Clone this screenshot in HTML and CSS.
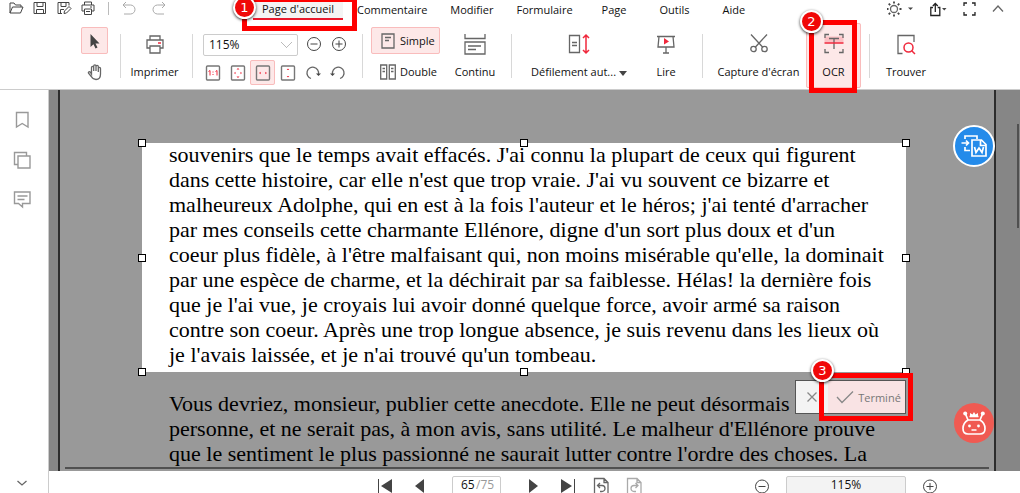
FILE: index.html
```html
<!DOCTYPE html>
<html lang="fr">
<head>
<meta charset="utf-8">
<meta name="viewport" content="width=device-width, initial-scale=1">
<title>Lecteur PDF</title>
<link rel="stylesheet" href="styles.css">
</head>
<body>
<div class="app">
  <header class="header">
    <div class="menubar">
      <div class="quick">
        <button class="icon-btn" aria-label="Ouvrir"><svg width="16" height="16" viewBox="0 0 16 16"><path d="M2 13V3h4l1.500 2H13v2M2 13l2.500-6H15l-2.500 6z"/></svg></button>
        <button class="icon-btn" aria-label="Enregistrer"><svg width="16" height="16" viewBox="0 0 16 16"><path d="M2 2.500h11.500v11H2zM5 2.500v4h6v-4M4.500 13.500v-4h7v4"/></svg></button>
        <button class="icon-btn" aria-label="Enregistrer sous"><svg width="16" height="16" viewBox="0 0 16 16"><path d="M6 13.500H2v-11h11v3M5 2.500v4h5v-4M4.500 13V9.500H8M8 13.500l.5-2.500L13 6.500l2 2-4.500 4.500z"/></svg></button>
        <button class="icon-btn" aria-label="Imprimer rapidement"><svg width="16" height="16" viewBox="0 0 16 16"><path d="M4.500 5V2h7v3M4.500 11H2V5h12v6h-2.500M4.500 9h7v5.500h-7zM10 7h2M6 11.500h4"/></svg></button>
        <span class="quick-divider"></span>
        <button class="icon-btn pale" aria-label="Annuler"><svg width="16" height="16" viewBox="0 0 16 16"><path d="M5 2L2 5l3 3M2 5h7.500a4.500 4.500 0 0 1 0 9H3"/></svg></button>
        <button class="icon-btn pale redo" aria-label="Rétablir"><svg width="16" height="16" viewBox="0 0 16 16"><path d="M11 2l3 3-3 3M14 5H6.500a4.500 4.500 0 0 0 0 9H13"/></svg></button>
      </div>
      <nav class="tabs">
        <button class="tab active">Page d'accueil</button>
        <button class="tab">Commentaire</button>
        <button class="tab">Modifier</button>
        <button class="tab">Formulaire</button>
        <button class="tab tab-page">Page</button>
        <button class="tab tab-tools">Outils</button>
        <button class="tab">Aide</button>
      </nav>
      <div class="window-tools">
        <button class="icon-btn" aria-label="Thème"><svg width="28" height="18" viewBox="0 0 28 18"><circle class="mid" cx="7" cy="9" r="3.500"/><path stroke-width="1.8" d="M7 1.500v2M7 14.500v2M-.5 9h2M12.500 9h2M1.700 3.700l1.500 1.500M10.800 12.800l1.500 1.500M1.700 14.300l1.500-1.500M10.800 5.200l1.500-1.500"/><path class="solid" d="M21 7.500h5L23.500 10z"/></svg></button>
        <button class="icon-btn" aria-label="Partager"><svg width="18" height="18" viewBox="0 0 18 18"><path class="dark" d="M3 7.500H.8v8h9v-8H7.700M5.300 12V3.500M2.800 6l2.500-2.500L7.800 6"/><path class="solid" d="M12 8h4.500l-2.200 2.500z"/></svg></button>
        <button class="icon-btn" aria-label="Plein écran"><svg width="14" height="18" viewBox="0 0 14 18"><path class="dark" d="M1 6V3h3M9 3h3v3M12 12v3H9M4 15H1v-3"/></svg></button>
        <button class="icon-btn" aria-label="Réduire le ruban"><svg width="12" height="18" viewBox="0 0 12 18"><path class="mid" d="M1 11.500l5-5.500 5 5.500"/></svg></button>
      </div>
    </div>

    <div class="ribbon">
      <div class="group group-pointer">
        <button class="square selected" aria-label="Sélection"><svg width="20" height="20" viewBox="0 0 20 20"><path class="solid" d="M5.500 3v13l3-2.700 2 4.200 2-1-2-4h4z"/></svg></button>
        <button class="square" aria-label="Main"><svg width="18" height="18" viewBox="0 0 18 18"><path class="mid" d="M5.500 11V4.500a1.100 1.100 0 0 1 2.200 0V8V3a1.100 1.100 0 0 1 2.300 0v5V3.500a1.100 1.100 0 0 1 2.300 0V9V5.500a1.100 1.100 0 0 1 2.200 0V11c0 3.500-1.500 5.500-4.500 5.500-2.500 0-3.500-1-4.700-3L2.500 10.200c-.6-1.200 1-2 1.800-1z"/></svg></button>
      </div>
      <div class="group group-print">
        <button class="tall"><svg width="24" height="24" viewBox="0 0 24 24"><path class="mid" d="M7 8V4h10v4M7 16H4V8h16v8h-3M7 14h10v7H7z"/><path class="hot" d="M15 11h3"/></svg><span>Imprimer</span></button>
      </div>
      <div class="group group-zoom">
        <div class="zoom-row">
          <select class="zoom-select" aria-label="Zoom"><option>115%</option></select>
          <button class="square" aria-label="Zoom arrière"><svg width="16" height="16" viewBox="0 0 16 16"><circle cx="8" cy="8" r="6.500"/><path d="M4.500 8h7"/></svg></button>
          <button class="square" aria-label="Zoom avant"><svg width="16" height="16" viewBox="0 0 16 16"><circle cx="8" cy="8" r="6.500"/><path d="M4.500 8h7M8 4.500v7"/></svg></button>
        </div>
        <div class="zoom-row">
          <button class="square" aria-label="Taille réelle"><svg width="16" height="16" viewBox="0 0 16 16"><rect class="frame" x="1.500" y="1" width="13" height="14" rx="1"/><path class="fine" d="M3.500 6.500L5 5.500v5M10.500 6.500l1.500-1v5M8 6.500v1M8 9v1"/></svg></button>
          <button class="square" aria-label="Page entière"><svg width="16" height="16" viewBox="0 0 16 16"><rect class="frame" x="1.500" y="1" width="13" height="14" rx="1"/><path class="hotfill" d="M8 3l1.500 1.500h-3zM8 13l1.500-1.500h-3zM4 8l1.500-1.300v2.600zM12 8l-1.500-1.300v2.600z"/></svg></button>
          <button class="square selected" aria-label="Ajuster à la largeur"><svg width="16" height="16" viewBox="0 0 16 16"><rect class="frame" x="1.500" y="1" width="13" height="14" rx="1"/><path class="hotfill" d="M4 8l1.700-1.300v2.600zM12 8l-1.700-1.300v2.600z"/></svg></button>
          <button class="square" aria-label="Ajuster à la hauteur"><svg width="16" height="16" viewBox="0 0 16 16"><rect class="frame" x="1.500" y="1" width="13" height="14" rx="1"/><path class="hotfill" d="M8 3.500L9.300 5H6.700zM8 12.500L9.300 11H6.700z"/></svg></button>
          <button class="square" aria-label="Rotation à droite"><svg width="16" height="16" viewBox="0 0 16 16"><path class="mid" d="M6 13.500A5.800 5.800 0 1 1 13.500 9"/><path class="solid" d="M11 8.500h5l-2.500 2.500z"/></svg></button>
          <button class="square" aria-label="Rotation à gauche"><svg width="16" height="16" viewBox="0 0 16 16"><path class="mid" d="M10 13.500A5.800 5.800 0 1 0 2.500 9"/><path class="solid" d="M0 8.500h5L2.500 11z"/></svg></button>
        </div>
      </div>
      <div class="group group-layout">
        <div class="stack">
          <button class="wide selected"><svg width="16" height="16" viewBox="0 0 16 16"><path class="mid" d="M2 1h12v14H2zM5 4.500h6M5 7.500h4"/></svg><span>Simple</span></button>
          <button class="wide"><svg width="16" height="16" viewBox="0 0 16 16"><path class="mid" d="M.7 1h6v14h-6zM9.300 1h6v14h-6zM2.500 4.500H5M2.500 7.500H5M11 4.500h2.500M11 7.500h2.500"/></svg><span>Double</span></button>
        </div>
        <button class="tall continu"><svg width="24" height="24" viewBox="0 0 24 24"><path class="mid" d="M2 2v4.500h20V2M2 10h20v12H2zM5 14h13M5 17.500h8"/></svg><span>Continu</span></button>
      </div>
      <div class="group group-read">
        <button class="tall scroll"><svg width="24" height="24" viewBox="0 0 24 24"><path class="mid" d="M2.500 3.500h10v17h-10zM5 10.500h5M5 13.500h5"/><path class="hot" d="M19 3.500v17M16 6l3-3 3 3M16 18l3 3 3-3"/></svg><span>Défilement aut... <i class="caret"></i></span></button>
        <button class="tall read"><svg width="24" height="24" viewBox="0 0 24 24"><path class="mid" d="M3 4.500h18M5 4.500L4 15h16L19 4.500M12 15v6M9 21h6"/><path class="hotfill" d="M10 6l5 3.500-5 3z"/></svg><span>Lire</span></button>
      </div>
      <div class="group group-capture">
        <button class="tall capture"><svg width="24" height="24" viewBox="0 0 24 24"><path class="mid" d="M4 2.500l12 13M20 2.500L8 15.500"/><circle class="mid" cx="6.500" cy="17" r="2.700"/><circle class="mid" cx="17.500" cy="17" r="2.700"/></svg><span>Capture d'écran</span></button>
        <button class="tall selected ocr"><svg width="24" height="24" viewBox="0 0 24 24"><path class="glow" d="M2.500 4.500h19v6h-19z"/><path class="mid" d="M3 6V2.500h4M17 2.500h4V6M21 17v3.500h-4M7 20.500H3V17M7 6.500h10M12 6.500V17"/><path class="hot" d="M2.500 11h19"/></svg><span>OCR</span></button>
      </div>
      <div class="group group-find">
        <button class="tall"><svg width="24" height="24" viewBox="0 0 24 24"><path class="mid" d="M8.500 21.500H4v-18h16V10"/><circle class="hot" cx="14.500" cy="15.500" r="4.500"/><path class="hot" d="M17.700 18.700L21 22"/></svg><span>Trouver</span></button>
      </div>
    </div>
  </header>

  <aside class="sidebar">
    <div class="side-tools">
      <button class="icon-btn side" aria-label="Signets"><svg width="18" height="18" viewBox="0 0 18 18"><path d="M3.500 1.500h11.500v14.500L9.200 12.500 3.500 16z"/></svg></button>
      <button class="icon-btn side" aria-label="Vignettes"><svg width="18" height="18" viewBox="0 0 18 18"><path d="M5 13.500H1.500v-12h12V5M5 5h12v12H5z"/></svg></button>
      <button class="icon-btn side" aria-label="Commentaires"><svg width="18" height="18" viewBox="0 0 18 18"><path d="M1.500 1h15.500v11.500H9.500V16l-4-3.500h-4zM4.500 5h10M4.500 8.500h7"/></svg></button>
    </div>
    <button class="icon-btn side" aria-label="Plus"><svg width="12" height="12" viewBox="0 0 12 12"><path class="mid" d="M1.500 4L6 8l4.500-4"/></svg></button>
  </aside>

  <main class="viewer">
    <article class="sheet">
      <div class="selection">
        <p class="text">souvenirs que le temps avait effacés. J'ai connu la plupart de ceux qui figurent<br>dans cette histoire, car elle n'est que trop vraie. J'ai vu souvent ce bizarre et<br>malheureux Adolphe, qui en est à la fois l'auteur et le héros; j'ai tenté d'arracher<br>par mes conseils cette charmante Ellénore, digne d'un sort plus doux et d'un<br>coeur plus fidèle, à l'être malfaisant qui, non moins misérable qu'elle, la dominait<br>par une espèce de charme, et la déchirait par sa faiblesse. Hélas! la dernière fois<br>que je l'ai vue, je croyais lui avoir donné quelque force, avoir armé sa raison<br>contre son coeur. Après une trop longue absence, je suis revenu dans les lieux où<br>je l'avais laissée, et je n'ai trouvé qu'un tombeau.</p>
        <i class="handle top left"></i><i class="handle top center"></i><i class="handle top right"></i>
        <i class="handle middle left"></i><i class="handle middle right"></i>
        <i class="handle bottom left"></i><i class="handle bottom center"></i><i class="handle bottom right"></i>
        <div class="confirm">
          <button class="cancel" aria-label="Annuler la sélection"><svg width="12" height="12" viewBox="0 0 12 12"><path d="M1.500 1.500l9 9M10.500 1.500l-9 9"/></svg></button>
          <button class="done"><svg width="18" height="14" viewBox="0 0 18 14"><path d="M1 7l5 5.500L17 1.500"/></svg><span>Terminé</span></button>
          <div class="mark mark-done"><b class="badge">3</b></div>
        </div>
      </div>
      <p class="text after">Vous devriez, monsieur, publier cette anecdote. Elle ne peut désormais<br>personne, et ne serait pas, à mon avis, sans utilité. Le malheur d'Ellénore prouve<br>que le sentiment le plus passionné ne saurait lutter contre l'ordre des choses. La</p>
      <hr class="rule">
    </article>
    <div class="scrollbar"></div>
    <button class="float float-word" aria-label="Convertir en Word"><svg width="28" height="28" viewBox="0 0 28 28"><path d="M5 7V4h12v3M1.500 11H8M6 8.500L8.500 11 6 13.500M5 15v3.500h5M12 8h9.500l4.500 4.500V24H12zM20.500 8v5.500H26"/><path d="M14.500 15l1.500 5.500 3-4.500 3 4.500 1.500-5.500"/></svg></button>
    <button class="float float-bot" aria-label="Assistant"><svg width="28" height="28" viewBox="0 0 28 28"><path d="M8 11h12q5 3 5 8.500T20 25H8q-5 0-5-5.500T8 11z"/><path d="M8 11L5.500 5M20 11l2.500-6M9.500 7.500h9M11.500 21h5"/><circle class="eye" cx="5.200" cy="4.500" r="2"/><circle class="eye" cx="22.800" cy="4.500" r="2"/><path class="eye" d="M10 8V4l2.500 1.500L14 3l1.500 2.500L18 4v4z"/><circle class="eye" cx="9.500" cy="17" r="1.400"/><circle class="eye" cx="18.500" cy="17" r="1.400"/></svg></button>
  </main>

  <footer class="footer">
    <div class="pager">
      <button class="icon-btn" aria-label="Première page"><svg width="16" height="20" viewBox="0 0 16 20"><path class="solid" d="M1 3h1v14H1zM15 3v14L4 10z"/></svg></button>
      <button class="icon-btn" aria-label="Page précédente"><svg width="16" height="20" viewBox="0 0 16 20"><path class="solid" d="M12 3v14L3 10z"/></svg></button>
      <div class="page-box"><input class="page-input" value="65" aria-label="Page"><span>/75</span></div>
      <button class="icon-btn" aria-label="Page suivante"><svg width="16" height="20" viewBox="0 0 16 20"><path class="solid" d="M4 3v14l9-7z"/></svg></button>
      <button class="icon-btn" aria-label="Dernière page"><svg width="16" height="20" viewBox="0 0 16 20"><path class="solid" d="M14 3h1v14h-1zM1 3v14l11-7z"/></svg></button>
      <div class="views">
        <button class="icon-btn" aria-label="Vue précédente"><svg width="18" height="20" viewBox="0 0 18 20"><path class="mid" d="M6 18H2.500V2.500H12L16 6.500V18h-3M12 2.500v4h4M8 7L5.500 9.500 8 12M5.500 9.500H10a2.500 2.500 0 0 1 0 6H8"/></svg></button>
        <button class="icon-btn pale" aria-label="Vue suivante"><svg width="18" height="20" viewBox="0 0 18 20"><path class="mid" d="M6 18H2.500V2.500H12L16 6.500V18h-3M12 2.500v4h4M10.500 7L13 9.500 10.500 12M13 9.500H9a2.500 2.500 0 0 0 0 6h2"/></svg></button>
      </div>
    </div>
    <div class="zoomer">
      <button class="icon-btn" aria-label="Réduire"><svg width="16" height="20" viewBox="0 0 16 20"><circle cx="8" cy="10.500" r="6.500"/><path d="M4.500 10.500h7"/></svg></button>
      <output class="zoom-value">115%</output>
      <button class="icon-btn" aria-label="Agrandir"><svg width="16" height="20" viewBox="0 0 16 20"><circle cx="8" cy="10.500" r="6.500"/><path d="M4.500 10.500h7M8 7v7"/></svg></button>
    </div>
  </footer>

  <div class="mark mark-home"><b class="badge">1</b></div>
  <div class="mark mark-ocr"><b class="badge">2</b></div>
</div>
</body>
</html>
```

FILE: styles.css
```css
* { box-sizing: border-box; }

body {
  margin: 0;
  font-family: "Open Sans", "Noto Sans", sans-serif;
  font-size: 11px;
  color: #111;
  background: #fff;
}

button, input, select {
  font: inherit;
  color: inherit;
  margin: 0;
  padding: 0;
  border: 0;
  background: none;
}

svg {
  display: block;
  flex: none;
  fill: none;
  stroke: #444;
  stroke-width: 1;
}

.mid { stroke: #666; stroke-width: 1.3; }
.dark { stroke: #222; stroke-width: 1.3; }
.frame { stroke: #777; stroke-width: 1.4; }
.hot { stroke: #f0283c; stroke-width: 1.5; }
.fine { stroke: #f0283c; }
.hotfill { fill: #f0283c; stroke: none; }
.solid { fill: #444; stroke: none; }
.glow { fill: #fbc0c4; stroke: none; }
.pale svg, .pale .mid { stroke: #aaa; }

.app {
  position: relative;
  display: grid;
  grid-template-columns: 49px 1fr;
  grid-template-rows: auto 1fr 22px;
  height: 100vh;
  overflow: hidden;
}

/* Header */
.header {
  grid-column: 1 / -1;
  border-bottom: 1px solid #ccc;
}

.menubar {
  display: flex;
  height: 20px;
  white-space: nowrap;
}

.icon-btn { display: flex; align-items: center; justify-content: center; }

.quick {
  display: flex;
  align-items: center;
  width: 253px;
  height: 16px;
  padding-left: 8px;
  gap: 8px;
}

.quick-divider { width: 1px; height: 13px; margin: 0 4px; background: #bbb; }
.redo { margin-left: 6px; }

.tabs { display: flex; height: 20px; gap: 5px; }
.tab { padding: 0 9px; height: 20px; line-height: 18px; }
.tab.active { background: #f4f4f4; border-bottom: 2px solid #e8192c; }
.tab-page { margin-left: 6px; }
.tab-tools { margin: 0 10px; }

.window-tools {
  display: flex;
  gap: 15px;
  height: 18px;
  margin-left: auto;
  padding-right: 16px;
}

.ribbon {
  display: flex;
  height: 69px;
  padding-left: 81px;
  white-space: nowrap;
}

.group {
  position: relative;
  display: flex;
  flex: none;
}

.group:not(:last-child)::after {
  content: "";
  position: absolute;
  right: 0;
  top: 14px;
  width: 1px;
  height: 44px;
  background: #d8d8d8;
}

.square {
  display: flex;
  align-items: center;
  justify-content: center;
  width: 25px;
  height: 25px;
}

.selected { background: #fde8e8; outline: 1px solid #f9bcbc; outline-offset: -1px; border-radius: 2px; }

.group-pointer { flex-direction: column; width: 40px; padding-top: 7px; gap: 4px; }
.group-pointer .square { width: 27px; height: 27px; }

.tall {
  display: flex;
  flex-direction: column;
  align-items: center;
  height: 65px;
  margin-top: 3px;
  padding-top: 9px;
  gap: 6px;
}

.tall span { line-height: 20px; }

.group-print { width: 72px; padding-right: 5px; justify-content: center; }

.group-zoom { flex-direction: column; width: 170px; padding: 11px 0 0 7px; gap: 4px; }
.zoom-row { display: flex; align-items: center; }
.zoom-select {
  appearance: none;
  width: 95px;
  height: 22px;
  margin: 2px 3px 0;
  padding-left: 5px;
  border: 1px solid #ccc;
  border-radius: 2px;
  font-size: 12px;
  background: linear-gradient(-45deg, transparent 46%, #bbb 46% 56%, transparent 56%) right 5px center / 6px 6px no-repeat,
    linear-gradient(45deg, transparent 46%, #bbb 46% 56%, transparent 56%) right 10px center / 6px 6px no-repeat;
}

.group-layout { width: 149px; padding-left: 8px; }
.stack { padding-top: 7px; display: flex; flex-direction: column; gap: 4px; }
.wide { display: flex; align-items: center; width: 69px; height: 27px; gap: 4px; padding-left: 9px; }
.continu { width: 70px; }

.group-read { width: 191px; }
.scroll { width: 134px; }
.read { width: 40px; }
.caret {
  display: inline-block;
  vertical-align: middle;
  border: 4px solid transparent;
  border-top: 5px solid #444;
  border-bottom: 0;
}

.group-capture { width: 167px; }
.capture { width: 103px; padding-left: 8px; }
.ocr { width: 55px; }

.group-find { width: 72px; justify-content: center; }

/* Sidebar */
.sidebar {
  grid-row: 2 / -1;
  display: flex;
  flex-direction: column;
  align-items: center;
  justify-content: space-between;
  padding: 21px 4px 4px 0;
  border-right: 1px solid #ccc;
}

.side-tools { display: flex; flex-direction: column; gap: 22px; }
.side svg { stroke: #999; stroke-width: 1.4; }

/* Document */
.viewer {
  position: relative;
  overflow: hidden;
  background: #868686;
  padding: 0 24px 0 9px;
}

.sheet {
  height: 100%;
  padding: 53px 5px 0 82px;
  border: solid #2c2c2c;
  border-width: 0 2px;
  background: #999;
  white-space: nowrap;
}

.selection {
  position: relative;
  display: flex;
  align-items: flex-end;
  width: 764px;
  height: 229px;
  padding: 0 0 5px 27px;
  background: #fff;
}

.text {
  margin: 0;
  font: 22px/25px "Liberation Serif", serif;
  color: #000;
}

.after { padding: 19px 0 1px 27px; }

.rule { margin: 0 0 0 -77px; border: 0; height: 2px; background: #505050; }

.handle {
  position: absolute;
  width: 8px;
  height: 8px;
  border: 1px solid #000;
  background: #fff;
}

.top { top: -4px; }
.middle { top: calc(50% - 4px); }
.bottom { bottom: -4px; }
.left { left: -4px; }
.center { left: calc(50% - 4px); }
.right { right: -4px; }

.confirm {
  position: absolute;
  right: 0;
  top: 237px;
  display: flex;
  width: 111px;
  height: 34px;
  border: 1px solid #555;
  background: #f3f3f3;
}

.confirm svg { stroke: #888; stroke-width: 1.3; }
.cancel { display: flex; align-items: center; justify-content: center; width: 32px; }
.done { display: flex; flex: 1; align-items: center; justify-content: center; gap: 4px; padding-left: 4px; background: #f9e3e4; color: #777; }

.scrollbar {
  position: absolute;
  right: 1px;
  top: 34px;
  width: 2px;
  height: 104px;
  background: #505050;
}

.float {
  position: absolute;
  display: flex;
  align-items: center;
  justify-content: center;
  width: 40px;
  height: 40px;
  border-radius: 50%;
}

.float svg { stroke: #fff; stroke-width: 1.7; }
.float .eye { fill: #fff; stroke: none; }
.float-word { right: 25px; top: 35px; width: 42px; height: 42px; border: 2px solid #fff; background: #248bea; }
.float-bot { right: 26px; top: 313px; background: #f05a52; }

/* Footer */
.footer { display: flex; justify-content: space-between; padding: 5px 82px 0 328px; font-size: 12px; }
.pager, .zoomer { display: flex; align-items: flex-start; }
.pager { gap: 19px; }
.views { display: flex; gap: 15px; margin-left: -3px; }
.page-box { display: flex; width: 49px; height: 24px; margin: 0 5px; padding-left: 8px; border: 1px solid #ccc; border-radius: 2px; color: #999; line-height: 16px; }
.page-input { width: 15px; height: 16px; color: #111; }
.zoomer { gap: 16px; }
.zoom-value { width: 120px; height: 24px; border: 1px solid #ccc; border-radius: 2px; background: #f3f3f3; text-align: center; line-height: 16px; }

/* Numbered step markers */
.mark { position: absolute; border: 5px solid #fe0000; pointer-events: none; }
.mark-home { left: 242px; top: -3px; width: 115px; height: 34px; }
.mark-ocr { left: 809px; top: 20px; width: 48px; height: 73px; }
.mark-done { right: -8px; top: -8px; width: 94px; height: 48px; }

.badge {
  position: absolute;
  display: flex;
  align-items: center;
  justify-content: center;
  width: 23px;
  height: 23px;
  border: 2px solid #fff;
  border-radius: 50%;
  background: #f00808;
  box-shadow: 0 1px 3px #000c;
  color: #fff;
  font: 13px/1 "DejaVu Sans", sans-serif;
}

.mark-home .badge { left: -14px; top: -6px; }
.mark-ocr .badge { left: -14px; top: -15px; }
.mark-done .badge { left: -13px; top: -19px; }
```
